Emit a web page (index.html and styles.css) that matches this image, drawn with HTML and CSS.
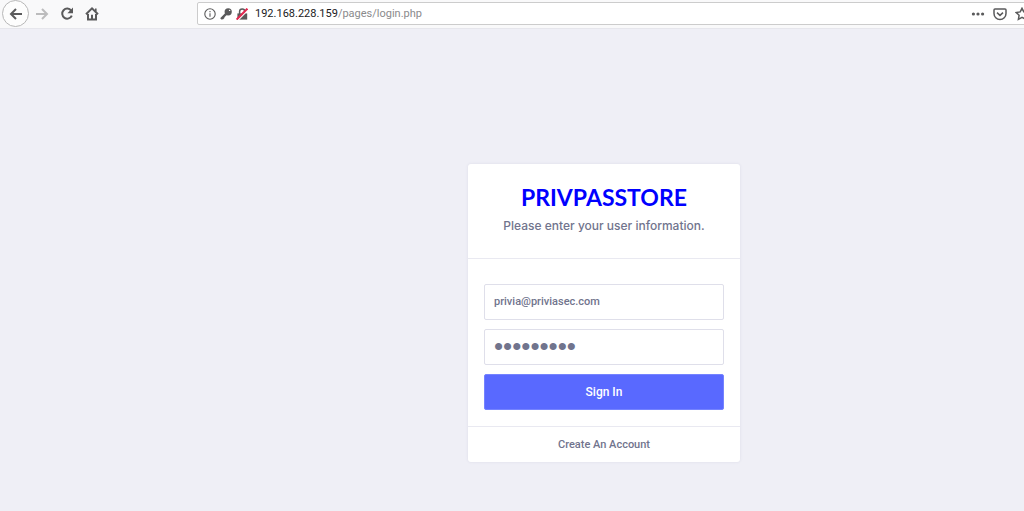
FILE: index.html
```html
<!DOCTYPE html>
<html lang="en">
  <head>
    <meta charset="UTF-8" />
    <meta name="viewport" content="width=device-width, initial-scale=1.0" />
    <title>PRIVPASSTORE</title>
    <link rel="stylesheet" href="styles.css">
  </head>
  <body>
    <header class="toolbar">
      <nav class="nav-buttons">
        <button type="button" class="back" aria-label="Back">
          <svg width="16" height="16" viewBox="0 0 16 16"><path d="M14 8H3M8 3L3 8l5 5" /></svg>
        </button>
        <button type="button" class="forward" aria-label="Forward">
          <svg width="16" height="16" viewBox="0 0 16 16"><path d="M2 8h11M8 3l5 5-5 5" /></svg>
        </button>
        <button type="button" aria-label="Reload">
          <svg width="16" height="16" viewBox="0 0 16 16"><path d="M12.2 4.6A5 5 0 1 0 12.8 9.6" /><path class="fill" d="M14 1.6v5.6H8.4z" /></svg>
        </button>
        <button type="button" aria-label="Home">
          <svg width="16" height="16" viewBox="0 0 16 16"><path d="M2 8.2L8 2.4l6 5.8" /><path d="M4 8v5.4h8V8" /><path class="fill" d="M7 8.8h2v4.8H7zM11 2.6h1.6v3H11z" /></svg>
        </button>
      </nav>
      <div class="urlbar">
        <svg class="info" width="12" height="12" viewBox="0 0 12 12"><circle cx="6" cy="6" r="5.2" /><path d="M6 5.2v3.6M6 2.9v1.3" /></svg>
        <svg width="12" height="12" viewBox="0 0 12 12"><circle class="fill" cx="8.2" cy="3.8" r="3.6" /><path class="key" d="M6.4 5.6L1 11M2.6 9.4l1.2 1.2" /><circle class="hole" cx="9.6" cy="2.4" r=".7" /></svg>
        <svg width="12" height="12" viewBox="0 0 12 12"><path class="fill" d="M1.4 5.4h9.8v6.2H1.4z" /><path d="M3.6 6V3.6a2.6 2.6 0 0 1 5.2 0V6" /><path class="gap" d="M1.2 12.8L12.6 1.4" /><path class="slash" d="M.6 11.6L11.4.6" /></svg>
        <div class="address"><span class="host">192.168.228.159</span>/pages/login.php</div>
        <svg class="dots" width="14" height="14" viewBox="0 0 14 14"><circle cx="2.4" cy="7" r="1.6" /><circle cx="7" cy="7" r="1.6" /><circle cx="11.6" cy="7" r="1.6" /></svg>
        <svg width="14" height="14" viewBox="0 0 14 14"><path d="M2 2h10q1 0 1 1v3.6a6 6 0 0 1-12 0V3q0-1 1-1z" /><path d="M4 5.6l3 2.8 3-2.8" /></svg>
        <svg class="star" width="14" height="14" viewBox="0 0 14 14"><path d="M7 1.3l1.8 3.6 4 .6-2.9 2.8.7 4L7 10.4l-3.6 1.9.7-4L1.2 5.5l4-.6z" /></svg>
      </div>
    </header>

    <main class="splash">
      <form class="card">
        <div class="card-header">
          <h1>PRIVPASSTORE</h1>
          <p>Please enter your user information.</p>
        </div>
        <div class="card-body">
          <input type="text" value="privia@priviasec.com" aria-label="Email" />
          <input type="password" value="privia123" aria-label="Password" />
          <button type="submit" class="signin">Sign In</button>
        </div>
        <div class="card-footer">
          <a href="#">Create An Account</a>
        </div>
      </form>
    </main>
  </body>
</html>
```

FILE: styles.css
```css
* {
  box-sizing: border-box;
}
body {
  margin: 0;
  min-height: 100vh;
  overflow-x: hidden;
  font-family: Roboto, "Liberation Sans", sans-serif;
  color: #71748d;
  background: #efeff6;
}
svg {
  flex: none;
  fill: none;
  stroke: #5a5a5b;
  stroke-width: 2;
}
svg .fill {
  fill: #5a5a5b;
  stroke: none;
}

.toolbar {
  display: flex;
  align-items: center;
  height: 29px;
  padding-bottom: 1px;
  overflow: hidden;
  background: #f9f9fa;
  border-bottom: 1px solid #e6e6ec;
}
.nav-buttons {
  display: flex;
  flex: none;
  align-items: center;
  width: 197px;
  padding-left: 2px;
}
.nav-buttons button {
  display: flex;
  align-items: center;
  justify-content: center;
  width: 25px;
  height: 26px;
  padding: 0;
  border: none;
  background: none;
}
.nav-buttons .back {
  width: 27px;
  height: 27px;
  border: 1px solid #b8b8b8;
  border-radius: 50%;
  background: #fdfdfd;
}
.forward svg {
  stroke: #bcbcbd;
}
.urlbar {
  display: flex;
  flex: 1;
  align-items: center;
  gap: 4px;
  height: 23px;
  min-width: 0;
  margin-right: -12px;
  padding: 0 6px;
  background: #fff;
  border: 1px solid #ccc;
  border-radius: 2px;
}
.urlbar svg {
  stroke-width: 1.5;
}
.urlbar .info {
  stroke-width: 1.1;
}
.urlbar .key {
  stroke-width: 2.4;
}
.urlbar .hole {
  fill: #fff;
  stroke: none;
}
.urlbar .gap {
  stroke: #fff;
}
.urlbar .slash {
  stroke: #e22850;
  stroke-width: 2;
}
.urlbar .dots {
  fill: #5a5a5b;
  stroke: none;
}
.dots + svg,
.star {
  margin-left: 4px;
}
.address {
  flex: 1;
  padding-left: 3px;
  font-size: 11px;
  white-space: nowrap;
  color: #8a8a8c;
}
.host {
  color: #1a1a1c;
}

.splash {
  display: flex;
  justify-content: center;
  padding: 135px 0 48px 184px;
}
.card {
  width: 272px;
  background: #fff;
  border-radius: 3px;
  box-shadow: 0 0 3px #dcdce8;
}
.card-header {
  height: 95px;
  padding-top: 18px;
  text-align: center;
  border-bottom: 1px solid #e9e9f1;
}
h1 {
  margin: 0;
  font: bold 23px/30px Lato, sans-serif;
  color: #00f;
}
.card-header p {
  margin: 4px 0 0;
  font: 500 12px/20px Inter, sans-serif;
}
.card-body {
  display: grid;
  gap: 9px;
  padding: 25px 16px 16px;
}
.card-body input {
  width: 100%;
  height: 36px;
  padding: 0 9px 2px;
  font: 500 11px Roboto, sans-serif;
  color: #71748d;
  background: #fff;
  border: 1px solid #dfdfea;
  border-radius: 2px;
}
.card-body input[type="password"] {
  font: 26px "Liberation Sans", sans-serif;
}
.signin {
  height: 36px;
  padding: 0;
  font: 500 12px Roboto, sans-serif;
  color: #fff;
  background: #5969ff;
  border: 1px solid #7583ff;
  border-radius: 2px;
}
.card-footer {
  height: 36px;
  text-align: center;
  line-height: 32px;
  border-top: 1px solid #e9e9f1;
}
.card-footer a {
  font-size: 11px;
  font-weight: 500;
  color: #71748d;
  text-decoration: none;
}
```
